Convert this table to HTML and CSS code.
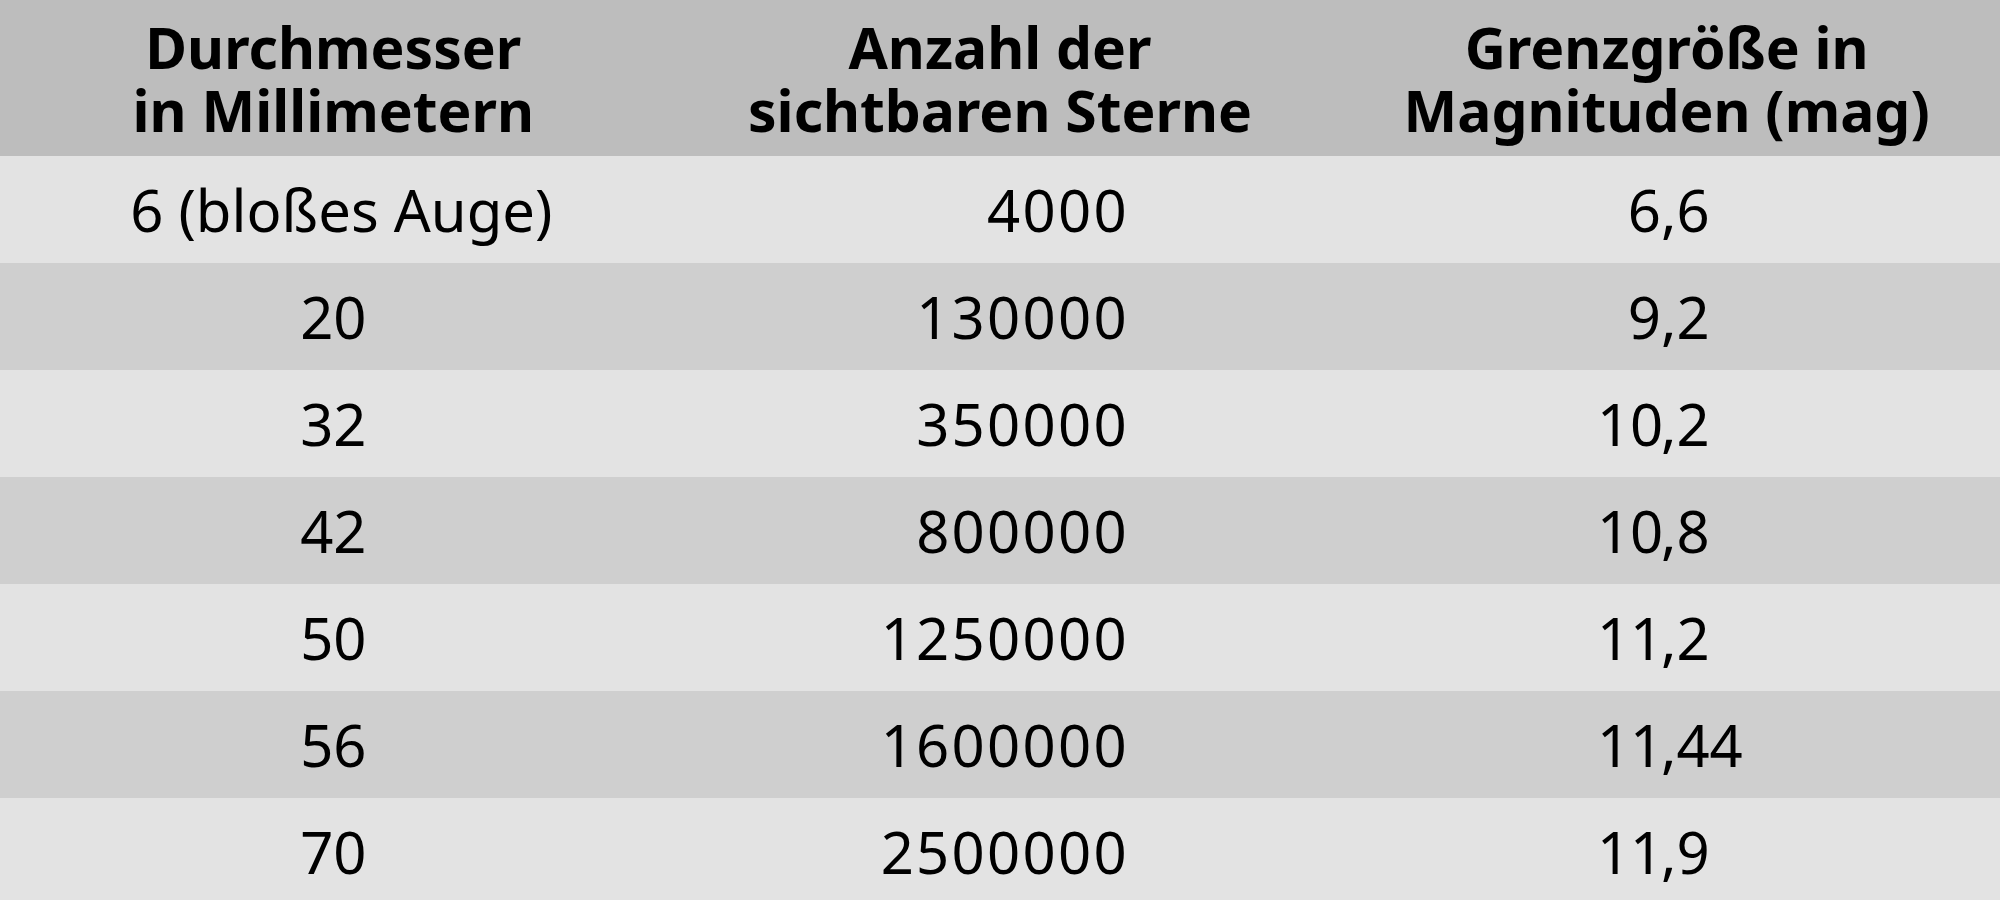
FILE: index.html
```html
<!DOCTYPE html>
<html lang="de">
<head>
<meta charset="utf-8">
<title>Grenzgröße</title>
<link rel="stylesheet" href="styles.css">
</head>
<body>
<div class="table">
  <div class="row head">
    <div class="cell">Durchmesser<br>in Millimetern</div>
    <div class="cell">Anzahl der<br>sichtbaren Sterne</div>
    <div class="cell">Grenzgröße in<br>Magnituden (mag)</div>
  </div>
  <div class="row light">
    <div class="cell c1"><span class="wide">6 (bloßes Auge)</span></div>
    <div class="cell"><span class="num">4000</span></div>
    <div class="cell"><span class="dec"><span class="int">6</span>,<span class="frac">6</span></span></div>
  </div>
  <div class="row dark">
    <div class="cell c1">20</div>
    <div class="cell"><span class="num">130000</span></div>
    <div class="cell"><span class="dec"><span class="int">9</span>,<span class="frac">2</span></span></div>
  </div>
  <div class="row light">
    <div class="cell c1">32</div>
    <div class="cell"><span class="num">350000</span></div>
    <div class="cell"><span class="dec"><span class="int">10</span>,<span class="frac">2</span></span></div>
  </div>
  <div class="row dark">
    <div class="cell c1">42</div>
    <div class="cell"><span class="num">800000</span></div>
    <div class="cell"><span class="dec"><span class="int">10</span>,<span class="frac">8</span></span></div>
  </div>
  <div class="row light">
    <div class="cell c1">50</div>
    <div class="cell"><span class="num">1250000</span></div>
    <div class="cell"><span class="dec"><span class="int">11</span>,<span class="frac">2</span></span></div>
  </div>
  <div class="row dark">
    <div class="cell c1">56</div>
    <div class="cell"><span class="num">1600000</span></div>
    <div class="cell"><span class="dec"><span class="int">11</span>,<span class="frac">44</span></span></div>
  </div>
  <div class="row light">
    <div class="cell c1">70</div>
    <div class="cell"><span class="num">2500000</span></div>
    <div class="cell"><span class="dec"><span class="int">11</span>,<span class="frac">9</span></span></div>
  </div>
</div>
</body>
</html>
```

FILE: styles.css
```css
html, body {
  margin: 0;
  padding: 0;
  background: #e3e3e3;
}

body {
  width: 2000px;
  height: 900px;
  overflow: hidden;
  font-family: "Noto Sans", "Open Sans", sans-serif;
  font-size: 58px;
  color: #000;
}

.table {
  display: flex;
  flex-direction: column;
}

.row {
  display: grid;
  grid-template-columns: 1fr 1fr 1fr;
  height: 107px;
}

.row.head {
  height: 156px;
  background: #bdbdbd;
  font-weight: 700;
  font-size: 57px;
  line-height: 63px;
  box-sizing: border-box;
  padding-top: 2px;
}

.row.light {
  background: #e3e3e3;
}

.row.dark {
  background: #cfcfcf;
}

.cell {
  display: flex;
  align-items: center;
  justify-content: center;
  text-align: center;
}

.c1 .wide {
  padding-left: 16px;
}

.num {
  display: inline-block;
  width: 258px;
  text-align: right;
  letter-spacing: 2.3px;
}

.dec {
  display: inline-flex;
  padding-left: 8px;
}

.int {
  display: inline-block;
  width: 64px;
  text-align: right;
}

.frac {
  display: inline-block;
  width: 68px;
  text-align: left;
}
```
